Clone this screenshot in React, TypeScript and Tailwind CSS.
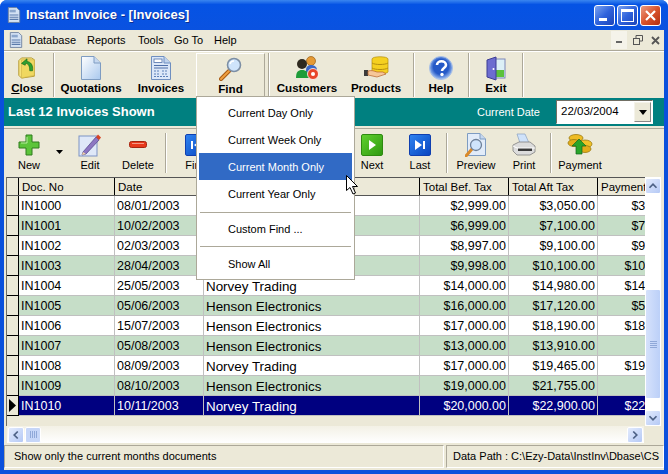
import type { ReactNode } from "react";

const UI = "font-['Liberation_Sans',sans-serif]";

const ROWS = [
  ["IN1000", "08/01/2003", "Norvey Trading", "$2,999.00", "$3,050.00", "$3,050.00"],
  ["IN1001", "10/02/2003", "Norvey Trading", "$6,999.00", "$7,100.00", "$7,100.00"],
  ["IN1002", "02/03/2003", "Norvey Trading", "$8,997.00", "$9,100.00", "$9,100.00"],
  ["IN1003", "28/04/2003", "Norvey Trading", "$9,998.00", "$10,100.00", "$10,100.00"],
  ["IN1004", "25/05/2003", "Norvey Trading", "$14,000.00", "$14,980.00", "$14,980.00"],
  ["IN1005", "05/06/2003", "Henson Electronics", "$16,000.00", "$17,120.00", "$5,000.00"],
  ["IN1006", "15/07/2003", "Henson Electronics", "$17,000.00", "$18,190.00", "$18,190.00"],
  ["IN1007", "05/08/2003", "Henson Electronics", "$13,000.00", "$13,910.00", ""],
  ["IN1008", "08/09/2003", "Norvey Trading", "$17,000.00", "$19,465.00", "$19,465.00"],
  ["IN1009", "08/10/2003", "Henson Electronics", "$19,000.00", "$21,755.00", ""],
  ["IN1010", "10/11/2003", "Norvey Trading", "$20,000.00", "$22,900.00", "$22,900.00"],
];

// the Payments column runs on under the vertical scrollbar
const COLS = [
  { w: "w-[96px]", label: "Doc. No", cell: "pl-[2px] text-[12.5px]" },
  { w: "w-[89px]", label: "Date", cell: "pl-[2px] text-[12.5px]" },
  { w: "w-[216px]", label: "Customer", cell: "pl-[2px] text-[13.4px]" },
  { w: "w-[89px]", label: "Total Bef. Tax", cell: "justify-end pr-[2px] text-[12.5px]" },
  { w: "w-[89px]", label: "Total Aft Tax", cell: "justify-end pr-[2px] text-[12.5px]" },
  { w: "w-[92px]", label: "Payments", cell: "justify-end pr-[2px] text-[12.5px]" },
];

function Sep({ short }: { short?: boolean }) {
  return (
    <div
      className={`mx-px w-[2px] shrink-0 self-center border-l border-r border-l-[#aca899] border-r-white ${
        short ? "h-[40px]" : "h-[44px]"
      }`}
    />
  );
}

function BigTool({ label, w, icon, raised }: { label: ReactNode; w: string; icon: ReactNode; raised?: boolean }) {
  return (
    <div
      className={`${w} flex h-[45px] shrink-0 flex-col items-center justify-start pt-[3px] ${
        raised ? "border border-t-white border-l-white border-r-[#aca899] border-b-[#aca899]" : ""
      }`}
    >
      <div className="flex h-[25px] items-center justify-center">{icon}</div>
      <div className="text-[11.6px] font-bold leading-[14px] text-black">{label}</div>
    </div>
  );
}

function SmallTool({ label, w, icon }: { label: string; w: string; icon: ReactNode }) {
  return (
    <div className={`${w} flex h-[46px] shrink-0 flex-col items-center pt-[4px]`}>
      <div className="flex h-[24px] items-center justify-center">{icon}</div>
      <div className="text-[11px] leading-[16px] text-black">{label}</div>
    </div>
  );
}

function WinButton({ children, red }: { children: ReactNode; red?: boolean }) {
  return (
    <div
      className={`flex h-[21px] w-[21px] items-center justify-center rounded-[3px] border border-white ${
        red ? "bg-gradient-to-br from-[#e99a80] via-[#d9532b] to-[#b32d0e]" : "bg-gradient-to-br from-[#7da2ee] via-[#2f62dc] to-[#1c44b8]"
      }`}
    >
      {children}
    </div>
  );
}

function ScrollBtn({ dir }: { dir: "up" | "down" | "left" | "right" }) {
  const d = {
    up: "M4 10 L8 6 L12 10",
    down: "M4 6 L8 10 L12 6",
    left: "M10 4 L6 8 L10 12",
    right: "M6 4 L10 8 L6 12",
  }[dir];
  return (
    <div className="flex h-[16px] w-[16px] shrink-0 items-center justify-center rounded-[2px] border border-white bg-gradient-to-br from-[#e3ebfd] to-[#b5c9f5]">
      <svg width="16" height="16" viewBox="0 0 16 16">
        <path d={d} fill="none" stroke="#4d6185" strokeWidth="2" />
      </svg>
    </div>
  );
}

function DocIcon({ size = 16 }: { size?: number }) {
  return (
    <svg width={size} height={size + 2} viewBox="0 0 16 18">
      <path d="M1.5 .5H11L14.5 4V17.5H1.5Z" fill="#d4e2f4" stroke="#6b7f9e" />
      <rect x="3" y="3" width="7" height="3" fill="#8ba6cc" />
      <path d="M3 9H13M3 11.5H13M3 14H13" stroke="#5b7bab" strokeWidth="1.2" />
    </svg>
  );
}

function CloseIcon() {
  return (
    <svg width="20" height="22" viewBox="0 0 20 24">
      <path d="M1 4 L4 1 H15 L18 3 V21 L4 23 L1 20Z" fill="#f6e27c" stroke="#b59a35" />
      <path d="M4 3 L18 3 V20 L4 23Z" fill="#f0d860" stroke="#c9ac42" strokeWidth=".6" />
      <path d="M10 2 L4 7 L8 9 L8.5 7 C11 7 13 9 13 15 L16 15 C17 9 14 5 10 5Z" fill="#2fa12f" stroke="#13661c" strokeWidth=".7" />
    </svg>
  );
}

function PageIcon() {
  return (
    <svg width="20" height="24" viewBox="0 0 20 24">
      <defs>
        <linearGradient id="pg" x1="0" y1="0" x2="1" y2="1">
          <stop offset="0" stopColor="#ffffff" />
          <stop offset="1" stopColor="#a9c8ee" />
        </linearGradient>
      </defs>
      <path d="M.5 .5H13L19.5 7V23.5H.5Z" fill="url(#pg)" stroke="#7e9cc2" />
      <path d="M13 .5V7H19.5" fill="#c6d8f0" stroke="#7e9cc2" />
    </svg>
  );
}

function InvoiceIcon() {
  return (
    <svg width="20" height="24" viewBox="0 0 20 24">
      <path d="M.5 .5H13L19.5 7V23.5H.5Z" fill="#dbe7f8" stroke="#6f8fc0" />
      <path d="M13 .5V7H19.5" fill="#c0d3ee" stroke="#6f8fc0" />
      <rect x="3" y="3" width="8" height="3.5" fill="#fff" stroke="#4f6fa8" strokeWidth=".8" />
      <path d="M3 9.5H17M3 12H17" stroke="#4f6fa8" />
      <path d="M3 15H9M11 15H17M3 18H9M11 18H17M3 20.5H17" stroke="#5d80b8" strokeDasharray="2 1" />
    </svg>
  );
}

function FindIcon() {
  return (
    <svg width="24" height="24" viewBox="0 0 24 24">
      <path d="M2 22 L10 14" stroke="#a85a10" strokeWidth="4" strokeLinecap="round" />
      <path d="M2 22 L10 14" stroke="#f0a040" strokeWidth="2" strokeLinecap="round" />
      <circle cx="15" cy="8" r="6.5" fill="#cfe4fb" stroke="#7d8fa5" strokeWidth="1.6" />
      <path d="M11 7a4 4 0 0 1 4-3" stroke="#fff" strokeWidth="1.5" fill="none" />
    </svg>
  );
}

function CustomersIcon() {
  return (
    <svg width="25" height="25" viewBox="0 0 25 25">
      <circle cx="16" cy="5" r="4.5" fill="#e59a35" stroke="#9a5d12" strokeWidth=".7" />
      <path d="M11 14c0-4 3-5 5-5s6 1 6 5v3H11Z" fill="#3a67c7" />
      <circle cx="7" cy="8" r="5" fill="#2f2a20" />
      <path d="M1 22c0-6 2-8 6-8s7 2 7 8Z" fill="#1f9c3a" />
      <circle cx="18" cy="18" r="5.5" fill="#e8452a" stroke="#fff" strokeWidth=".8" />
      <circle cx="18" cy="18" r="2" fill="#fff" />
    </svg>
  );
}

function ProductsIcon() {
  return (
    <svg width="25" height="24" viewBox="0 0 25 24">
      <path d="M8 3c0-3 16-3 16 0v13c0 2-16 2-16 0Z" fill="#f5d020" stroke="#b58f10" strokeWidth=".7" />
      <path d="M8 7c3 2 13 2 16 0M8 12c3 2 13 2 16 0" stroke="#b58f10" fill="none" />
      <rect x="0" y="14" width="4" height="6" fill="#3c3c3c" />
      <path d="M4 15 C8 14 10 15 13 16 L19 16 L22 18 L13 21 L4 19Z" fill="#f6c79a" stroke="#b5622a" strokeWidth=".7" />
    </svg>
  );
}

function HelpIcon() {
  return (
    <svg width="24" height="24" viewBox="0 0 24 24">
      <defs>
        <radialGradient id="hp" cx=".5" cy=".45" r=".6">
          <stop offset=".55" stopColor="#2559c7" />
          <stop offset=".85" stopColor="#8fb2ec" />
          <stop offset="1" stopColor="#e8effb" />
        </radialGradient>
      </defs>
      <circle cx="12" cy="12" r="11.5" fill="url(#hp)" stroke="#a8bfe5" />
      <path d="M8 9c0-5 9-5 9 0 0 3-4 3-4 6" fill="none" stroke="#fff" strokeWidth="2.6" />
      <circle cx="13" cy="18.5" r="1.7" fill="#fff" />
    </svg>
  );
}

function ExitIcon() {
  return (
    <svg width="20" height="25" viewBox="0 0 20 25">
      <rect x="8" y="3" width="11" height="19" fill="#dceff6" stroke="#7c87b8" />
      <rect x="9" y="14" width="9" height="7" fill="#5cc23c" />
      <path d="M1 4 L10 1 V24 L1 21Z" fill="#6c6cd0" stroke="#3d3d94" />
      <circle cx="7.5" cy="13" r="1" fill="#fff" />
    </svg>
  );
}

function PlusIcon() {
  return (
    <svg width="22" height="22" viewBox="0 0 22 22">
      <path d="M8 1H14V8H21V14H14V21H8V14H1V8H8Z" fill="#5cc43a" stroke="#2f7d1e" />
      <path d="M9 3V9H3" stroke="#b6ec9f" fill="none" />
    </svg>
  );
}

function EditIcon() {
  return (
    <svg width="24" height="24" viewBox="0 0 24 24">
      <rect x="1" y="3" width="18" height="20" fill="#dfe8f8" stroke="#7c93c4" />
      <path d="M5 19 L18 4 L21 7 L8 21 L4 22Z" fill="#8d77c2" stroke="#4d3f86" strokeWidth=".7" />
      <path d="M18 4 L20 1.5 L23 4.5 L21 7Z" fill="#d94425" />
      <path d="M5 19 L8 21 L4 22Z" fill="#f2d5a4" />
    </svg>
  );
}

function MinusIcon() {
  return (
    <svg width="18" height="8" viewBox="0 0 18 8">
      <rect x=".5" y=".5" width="17" height="6" rx="2" fill="#e8391c" stroke="#a5250f" />
      <path d="M3 2.5H15" stroke="#f49a85" />
    </svg>
  );
}

function NavIcon({ kind }: { kind: "first" | "next" | "last" }) {
  const green = kind === "next";
  return (
    <div
      className={`flex h-[22px] w-[22px] items-center justify-center rounded-[2px] border bg-gradient-to-br ${
        green ? "border-[#2e8a10] from-[#5fd02e] to-[#2f9a10]" : "border-[#0f3fb0] from-[#2f82f0] to-[#0a45c0]"
      }`}
    >
      <svg width="12" height="12" viewBox="0 0 12 12" fill="#fff">
        {kind === "first" && <path d="M1 2H3V10H1ZM11 1V11L4 6Z" />}
        {kind === "next" && <path d="M3 1V11L10 6Z" />}
        {kind === "last" && <path d="M1 1V11L8 6ZM9 2H11V10H9Z" />}
      </svg>
    </div>
  );
}

function PreviewIcon() {
  return (
    <svg width="22" height="24" viewBox="0 0 22 24">
      <path d="M2.5 .5H15L20.5 6V22.5H2.5Z" fill="#e2ecf9" stroke="#7e9cc2" />
      <path d="M15 .5V6H20.5" fill="#c6d8f0" stroke="#7e9cc2" />
      <path d="M1 23 L7 16" stroke="#d98a2a" strokeWidth="3" strokeLinecap="round" />
      <circle cx="11" cy="12" r="5.5" fill="#cfe4fb" stroke="#6f829a" strokeWidth="1.3" />
    </svg>
  );
}

function PrintIcon() {
  return (
    <svg width="24" height="24" viewBox="0 0 24 24">
      <path d="M5 1 L13 1 L17 10 H8Z" fill="#cfe2fa" stroke="#8aa0c0" strokeWidth=".7" />
      <path d="M1 12 L7 9 H18 L23 13 V19 L18 22 H5 L1 18Z" fill="#dcdcdc" stroke="#808080" strokeWidth=".8" />
      <path d="M6 15H20V18H6Z" fill="#3a3a3a" />
      <path d="M1 13 L5 15 H23" stroke="#fff" fill="none" />
    </svg>
  );
}

function PaymentIcon() {
  return (
    <svg width="26" height="24" viewBox="0 0 26 24">
      <ellipse cx="9" cy="5" rx="7" ry="3.5" fill="#eebc24" stroke="#9c7a10" strokeWidth=".8" />
      <ellipse cx="7" cy="10" rx="6" ry="3.5" fill="#e2ac1a" stroke="#9c7a10" strokeWidth=".8" />
      <ellipse cx="18" cy="11" rx="7" ry="4" fill="#f0c228" stroke="#9c7a10" strokeWidth=".8" />
      <ellipse cx="18" cy="16" rx="6" ry="3.5" fill="#e2ac1a" stroke="#9c7a10" strokeWidth=".8" />
      <path d="M12 6 L5 13 H9 V21 H15 V13 H19Z" fill="#2aa52a" stroke="#13661c" strokeWidth=".7" />
    </svg>
  );
}

export default function App() {
  return (
    <div className={`${UI} relative flex h-[474px] w-[668px] flex-col overflow-hidden rounded-t-[7px] bg-[#0a50dc] text-black`}>
      {/* Title bar */}
      <div className="flex h-[30px] shrink-0 items-center bg-gradient-to-b from-[#3a86f0] via-[#0553e4] via-[15%] to-[#0a52e0] pl-[7px] pr-[7px]">
        <DocIcon size={14} />
        <div className="ml-[5px] flex-1 text-[13px] font-bold text-white [text-shadow:1px_1px_#0f2f90]">
          Instant Invoice - [Invoices]
        </div>
        <div className="flex gap-[2px]">
          <WinButton>
            <div className="mt-[9px] mr-[4px] h-[3px] w-[8px] bg-white" />
          </WinButton>
          <WinButton>
            <div className="h-[13px] w-[13px] border border-t-[3px] border-white" />
          </WinButton>
          <WinButton red>
            <svg width="13" height="13" viewBox="0 0 13 13">
              <path d="M2 2L11 11M11 2L2 11" stroke="#fff" strokeWidth="2.2" />
            </svg>
          </WinButton>
        </div>
      </div>

      <div className="mx-[4px] mb-[4px] flex min-h-0 flex-1 flex-col bg-[#ece9d8]">
        {/* Menu bar */}
        <div className="flex h-[21px] shrink-0 items-center border-b border-[#aca899] pl-[5px] pr-[1px] text-[11px]">
          <DocIcon size={14} />
          <div className="ml-[6px] w-[58px]">Database</div>
          <div className="w-[51px]">Reports</div>
          <div className="w-[36px]">Tools</div>
          <div className="w-[40px]">Go To</div>
          <div className="flex-1">Help</div>
          <div className="flex h-[18px] w-[16px] items-center justify-center bg-[#f5f3ea] text-[#555]">
            <div className="mt-[4px] h-[2px] w-[6px] bg-[#666]" />
          </div>
          <div className="ml-[3px] flex h-[18px] w-[16px] items-center justify-center">
            <svg width="10" height="10" viewBox="0 0 10 10" fill="none" stroke="#555">
              <rect x=".5" y="3.5" width="6" height="6" />
              <path d="M3 3V.5H9.5V6H7" />
            </svg>
          </div>
          <div className="ml-[1px] flex h-[18px] w-[16px] items-center justify-center">
            <svg width="9" height="9" viewBox="0 0 9 9">
              <path d="M1 1L8 8M8 1L1 8" stroke="#555" strokeWidth="1.8" />
            </svg>
          </div>
        </div>

        {/* Main toolbar */}
        <div className="flex h-[47px] shrink-0 items-center border-t border-white">
          <BigTool w="w-[46px]" icon={<CloseIcon />} label={<><span className="underline">C</span>lose</>} />
          <div className="w-[2px] shrink-0" />
          <Sep />
          <BigTool w="w-[70px]" icon={<PageIcon />} label="Quotations" />
          <BigTool w="w-[70px]" icon={<InvoiceIcon />} label="Invoices" />
          <BigTool w="w-[69px]" raised icon={<FindIcon />} label="Find" />
          <div className="w-[2px] shrink-0" />
          <Sep />
          <BigTool w="w-[72px]" icon={<CustomersIcon />} label="Customers" />
          <BigTool w="w-[66px]" icon={<ProductsIcon />} label="Products" />
          <div className="w-[3px] shrink-0" />
          <Sep />
          <BigTool w="w-[50px]" icon={<HelpIcon />} label="Help" />
          <div className="w-[1px] shrink-0" />
          <Sep />
          <BigTool w="w-[50px]" icon={<ExitIcon />} label="Exit" />
          <Sep />
        </div>

        {/* Teal heading */}
        <div className="flex h-[28px] shrink-0 items-center bg-[#008080] pl-[4px] pr-[11px]">
          <div className="flex-1 text-[13px] font-bold text-white">Last 12 Invoices Shown</div>
          <div className="mr-[16px] text-[11px] text-white">Current Date</div>
          <div className="flex h-[24px] w-[97px] items-center justify-between border border-t-[#716f64] border-l-[#716f64] border-r-white border-b-white bg-white pl-[4px] pr-[1px] text-[11.5px]">
            <span>22/03/2004</span>
            <div className="flex h-[20px] w-[17px] items-center justify-center border border-[#f5f3ea] border-r-[#888] border-b-[#888] bg-[#ece9d8]">
              <svg width="8" height="5" viewBox="0 0 8 5">
                <path d="M0 0H8L4 5Z" fill="#000" />
              </svg>
            </div>
          </div>
        </div>

        {/* Record toolbar */}
        <div className="mt-[2px] flex h-[49px] shrink-0 items-start border-t border-[#aca899] pl-[1px]">
          <SmallTool w="w-[48px]" icon={<PlusIcon />} label="New" />
          <div className="w-[13px] shrink-0 pt-[21px]">
            <svg width="7" height="4" viewBox="0 0 7 4" className="ml-[3px]">
              <path d="M0 0H7L3.5 4Z" fill="#000" />
            </svg>
          </div>
          <SmallTool w="w-[48px]" icon={<EditIcon />} label="Edit" />
          <SmallTool w="w-[48px]" icon={<MinusIcon />} label="Delete" />
          <div className="w-[2px] shrink-0" />
          <Sep short />
          <div className="w-[4px] shrink-0" />
          <SmallTool w="w-[48px]" icon={<NavIcon kind="first" />} label="First" />
          <div className="w-[128px] shrink-0" />
          <SmallTool w="w-[48px]" icon={<NavIcon kind="next" />} label="Next" />
          <SmallTool w="w-[48px]" icon={<NavIcon kind="last" />} label="Last" />
          <div className="w-[1px] shrink-0" />
          <Sep short />
          <SmallTool w="w-[54px]" icon={<PreviewIcon />} label="Preview" />
          <SmallTool w="w-[42px]" icon={<PrintIcon />} label="Print" />
          <div className="w-[4px] shrink-0" />
          <Sep short />
          <SmallTool w="w-[54px]" icon={<PaymentIcon />} label="Payment" />
        </div>

        {/* Grid + vertical scrollbar */}
        <div className="ml-[2px] mr-[3px] flex h-[249px] shrink-0 items-stretch border-l border-[#716f64]">
          <div className="flex min-w-0 flex-1 flex-col overflow-hidden">
            <div className="flex h-[19px] shrink-0 border-t border-b border-[#555] bg-[#ece9d8] text-[11.5px]">
              <div className="w-[12px] shrink-0 border-r border-black" />
              {COLS.map((c) => (
                <div key={c.label} className={`${c.w} shrink-0 overflow-hidden whitespace-nowrap border-r border-black pl-[3px] leading-[19px]`}>
                  {c.label}
                </div>
              ))}
            </div>
            {ROWS.map((r, i) => {
              const sel = i === ROWS.length - 1;
              const bg = sel ? "bg-[#000080] text-white" : i % 2 ? "bg-[#c6dec8]" : "bg-white";
              return (
                <div key={r[0]} className="flex h-[20px] shrink-0">
                  <div className="flex w-[12px] shrink-0 items-center justify-center border-r border-b border-black bg-[#ece9d8]">
                    {sel && (
                      <svg width="7" height="13" viewBox="0 0 7 13">
                        <path d="M0 0L7 6.5L0 13Z" fill="#000" />
                      </svg>
                    )}
                  </div>
                  {COLS.map((c, j) => (
                    <div
                      key={c.label}
                      className={`${c.w} ${bg} ${c.cell} flex shrink-0 items-center overflow-hidden whitespace-nowrap border-r border-b border-[#c0c0c0] pt-[2px] leading-[17px]`}
                    >
                      {r[j]}
                    </div>
                  ))}
                </div>
              );
            })}
            <div className="flex-1" />
          </div>
          <div className="flex w-[16px] shrink-0 flex-col items-center bg-white pt-[1px]">
            <ScrollBtn dir="up" />
            <div className="flex-1" />
            <div className="flex h-[110px] w-[16px] items-center justify-center rounded-[2px] border border-white bg-gradient-to-r from-[#d5e1fb] to-[#bcd0f8]">
              <div className="h-[7px] w-[7px] bg-[repeating-linear-gradient(0deg,#8fa8d8_0_1px,transparent_1px_2px)]" />
            </div>
            <div className="h-[11px]" />
            <ScrollBtn dir="down" />
          </div>
        </div>

        {/* Horizontal scrollbar */}
        <div className="ml-[3px] mr-[20px] flex h-[17px] shrink-0 items-center gap-[1px] bg-gradient-to-b from-[#f3f1e6] to-white pl-[1px] pr-[1px]">
          <ScrollBtn dir="left" />
          <div className="flex h-[16px] w-[16px] items-center justify-center rounded-[2px] border border-white bg-[#c6d6f8]">
            <div className="h-[7px] w-[7px] bg-[repeating-linear-gradient(90deg,#8fa8d8_0_1px,transparent_1px_2px)]" />
          </div>
          <div className="flex-1" />
          <ScrollBtn dir="right" />
        </div>

        {/* Status bar */}
        <div className="mt-[2px] flex h-[23px] shrink-0 gap-[2px] text-[11px]">
          <div className="flex-1 border border-[#aca899] border-r-white border-b-white pl-[9px] leading-[21px]">Show only the current months documents</div>
          <div className="w-[218px] overflow-hidden whitespace-nowrap border border-[#aca899] border-r-white border-b-white pl-[6px] leading-[21px]">
            Data Path : C:\Ezy-Data\InstInv\Dbase\CS
          </div>
        </div>
      </div>

      {/* Find drop-down */}
      <div className="absolute left-[196px] top-[96px] h-[184px] w-[159px] border border-[#aca899] bg-white p-[2px] text-[11px]">
        {["Current Day Only", "Current Week Only", "Current Month Only", "Current Year Only"].map((m, i) => (
          <div key={m} className={`flex h-[27px] items-center pl-[29px] pt-[2px] ${i === 2 ? "bg-[#316ac5] text-white" : ""}`}>
            {m}
          </div>
        ))}
        <div className="mx-[1px] my-[5px] border-t border-[#aca899]" />
        <div className="flex h-[22px] items-center pl-[29px]">Custom Find ...</div>
        <div className="mx-[1px] my-[6px] border-t border-[#aca899]" />
        <div className="flex h-[22px] items-center pl-[29px]">Show All</div>
      </div>

      {/* Mouse pointer */}
      <svg className="absolute left-[346px] top-[175px]" width="13" height="20" viewBox="0 0 13 20">
        <path d="M.5 .5V15.5L4 12.5L7 19L9.5 18L6.5 11.5H11.5Z" fill="#fff" stroke="#000" />
      </svg>
    </div>
  );
}
